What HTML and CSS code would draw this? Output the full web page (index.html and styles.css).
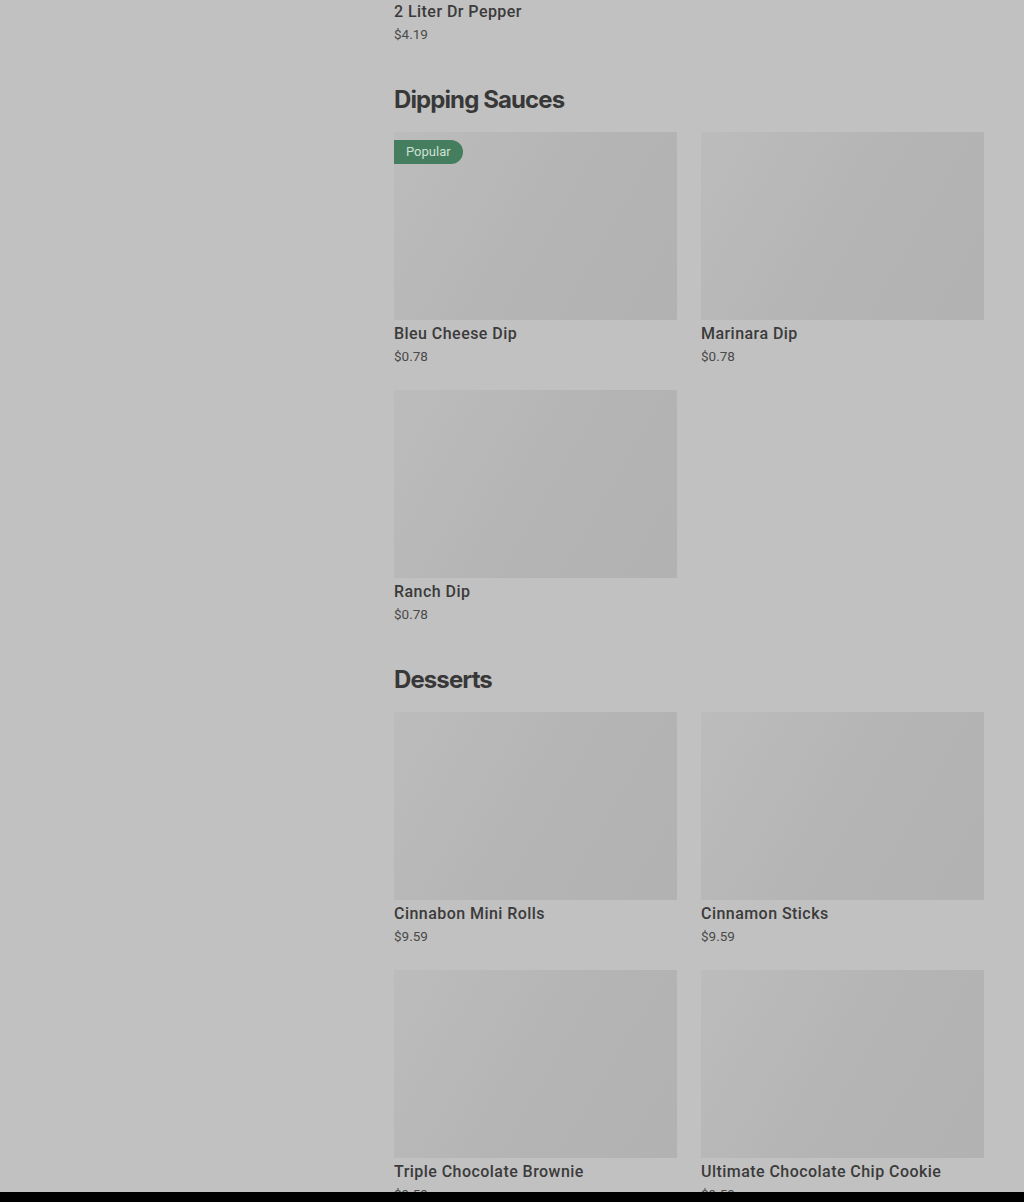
FILE: index.html
```html
<!DOCTYPE html>
<html>
<head>
    <meta charset="UTF-8">
    <meta name="viewport" content="width=device-width, initial-scale=1.0">
    <title>Menu</title>
    <link rel="stylesheet" href="styles.css">
</head>
<body>
    <div class="menu">
        <div class="item-info">
            <div class="item-name">2 Liter Dr Pepper</div>
            <div class="item-price">$4.19</div>
        </div>

        <div class="section">
            <h2>Dipping Sauces</h2>
            <div class="grid">
                <div class="card">
                    <div class="photo"><span class="badge">Popular</span></div>
                    <div class="item-name">Bleu Cheese Dip</div>
                    <div class="item-price">$0.78</div>
                </div>
                <div class="card">
                    <div class="photo"></div>
                    <div class="item-name">Marinara Dip</div>
                    <div class="item-price">$0.78</div>
                </div>
                <div class="card">
                    <div class="photo"></div>
                    <div class="item-name">Ranch Dip</div>
                    <div class="item-price">$0.78</div>
                </div>
            </div>
        </div>

        <div class="section">
            <h2>Desserts</h2>
            <div class="grid">
                <div class="card">
                    <div class="photo"></div>
                    <div class="item-name">Cinnabon Mini Rolls</div>
                    <div class="item-price">$9.59</div>
                </div>
                <div class="card">
                    <div class="photo"></div>
                    <div class="item-name">Cinnamon Sticks</div>
                    <div class="item-price">$9.59</div>
                </div>
                <div class="card">
                    <div class="photo"></div>
                    <div class="item-name">Triple Chocolate Brownie</div>
                    <div class="item-price">$9.59</div>
                </div>
                <div class="card">
                    <div class="photo"></div>
                    <div class="item-name">Ultimate Chocolate Chip Cookie</div>
                    <div class="item-price">$9.59</div>
                </div>
            </div>
        </div>
    </div>
    <div class="bottom-bar"></div>
</body>
</html>
```

FILE: styles.css
```css
* {
    padding: 0;
    margin: 0;
    box-sizing: border-box;
}
body {
    background: #c1c1c1;
    color: #3a3a3a;
    font-family: Roboto, "Liberation Sans", sans-serif;
    height: 1202px;
    overflow: hidden;
}
.menu {
    width: 590px;
    margin-left: 394px;
}
.section {
    margin-top: 40px;
}
h2 {
    font-family: Inter, "Liberation Sans", sans-serif;
    font-size: 24px;
    font-weight: 700;
    line-height: 32px;
    letter-spacing: -0.9px;
    color: #383838;
    margin-bottom: 16px;
}
.grid {
    display: grid;
    grid-template-columns: 283px 283px;
    column-gap: 24px;
    row-gap: 24px;
}
.photo {
    position: relative;
    height: 188px;
    background: linear-gradient(120deg, #bcbcbc 0%, #b4b4b4 55%, #b2b2b2 100%);
    margin-bottom: 2px;
}
.badge {
    position: absolute;
    left: 0;
    top: 8px;
    height: 24px;
    padding: 0 12px;
    line-height: 24px;
    font-size: 13px;
    color: #cfe0d5;
    background: #447e5f;
    border-radius: 0 12px 12px 0;
}
.item-name {
    font-size: 16px;
    font-weight: 500;
    line-height: 22px;
    letter-spacing: 0.45px;
    color: #3b3b3b;
    padding-top: 1px;
}
.item-price {
    font-size: 13.5px;
    line-height: 20px;
    margin-top: 1px;
    color: #4a4a4a;
}
.bottom-bar {
    position: fixed;
    left: 0;
    right: 0;
    bottom: 0;
    height: 10px;
    background: #000;
}
```
